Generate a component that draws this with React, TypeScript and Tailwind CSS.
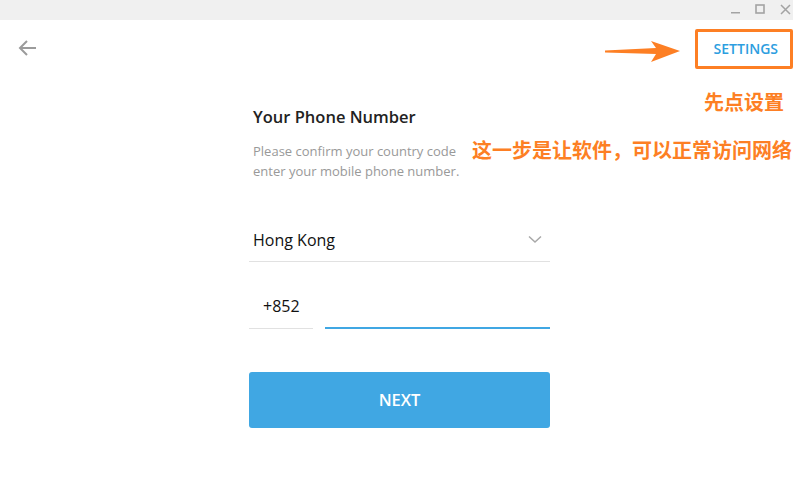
import React from 'react';

const ORANGE = '#fd7f24';

function TitleBar() {
  return (
    <div className="h-[20px] bg-[#f0f0f0] flex items-start justify-end">
      <div className="flex items-center h-[20px] gap-[15px] pr-[2px]">
        {/* minimize */}
        <svg width="9" height="20" viewBox="0 0 9 20">
          <rect x="0" y="12" width="9" height="1.5" fill="#a3a3a3" />
        </svg>
        {/* maximize */}
        <svg width="10" height="20" viewBox="0 0 10 20">
          <rect x="1" y="5" width="8" height="8" fill="none" stroke="#a3a3a3" strokeWidth="1.6" />
        </svg>
        {/* close */}
        <svg width="11" height="20" viewBox="0 0 11 20">
          <path d="M1 5 L10 14 M10 5 L1 14" stroke="#a3a3a3" strokeWidth="1.5" />
        </svg>
      </div>
    </div>
  );
}

function Annotations() {
  return (
    <>
      {/* Arrow pointing at settings */}
      <svg
        className="absolute left-[604px] top-[40px]"
        width="78"
        height="24"
        viewBox="0 0 78 24"
      >
        <polygon
          points="1,10.5 52,8 47,1 76,11 47,22 52,14 1,12.5"
          fill={ORANGE}
        />
      </svg>

      {/* Box around settings */}
      <div className="absolute left-[695px] top-[29px] w-[98px] h-[40px] border-[3px] border-[#fd7f24] rounded-[2px] pointer-events-none" />

      <div
        className="absolute left-[704px] top-[90px] text-[20px] leading-[24px] font-bold text-[#fd7f24]"
        style={{ fontFamily: '"Noto Sans CJK SC", sans-serif' }}
      >
        先点设置
      </div>

      {/* white backing hides the end of the subtitle line, as in the capture */}
      <div
        className="absolute left-[456px] top-[138px] pl-[16px] bg-white text-[20px] leading-[24px] font-bold text-[#fd7f24] whitespace-nowrap"
        style={{ fontFamily: '"Noto Sans CJK SC", sans-serif' }}
      >
        这一步是让软件，可以正常访问网络
      </div>
    </>
  );
}

export default function App() {
  return (
    <div
      className="relative w-[793px] h-[492px] bg-white overflow-hidden"
      style={{ fontFamily: '"Open Sans", "Liberation Sans", sans-serif' }}
    >
      <TitleBar />

      {/* Header row */}
      <div className="h-[56px] flex items-center justify-between pl-[18px] pr-[15px]">
        <svg width="19" height="18" viewBox="0 0 19 18">
          <path
            d="M18 9 H2.5 M9 2 L2 9 L9 16"
            fill="none"
            stroke="#9b9b9b"
            strokeWidth="2"
          />
        </svg>
        <button className="text-[14px] font-semibold text-[#2d9ee0]">
          SETTINGS
        </button>
      </div>

      {/* Form column */}
      <div className="ml-[249px] w-[301px] mt-[29px]">
        <h1 className="pl-[4px] text-[16.5px] leading-[24px] font-semibold text-[#222]">
          Your Phone Number
        </h1>
        <p className="pl-[4px] mt-[12px] text-[13px] leading-[20px] text-[#999] whitespace-nowrap">
          Please confirm your country code and
          <br />
          enter your mobile phone number.
        </p>

        {/* Country select */}
        <div className="mt-[37px] h-[44px] flex items-center justify-between border-b border-[#e1e1e1] pl-[4px] pr-[8px]">
          <span className="text-[16px] text-[#111]">Hong Kong</span>
          <svg width="14" height="9" viewBox="0 0 14 9">
            <path d="M1 1.5 L7 7 L13 1.5" fill="none" stroke="#a8a8a8" strokeWidth="1.5" />
          </svg>
        </div>

        {/* Phone input */}
        <div className="mt-[22px] flex items-stretch h-[45px]">
          <div className="w-[64px] border-b border-[#e1e1e1] flex items-center pl-[14px] text-[16px] text-[#111]">
            +852
          </div>
          <div className="ml-[12px] flex-1 border-b-2 border-[#40a7e3]" />
        </div>

        <button className="mt-[43px] w-full h-[56px] rounded-[3px] bg-[#40a7e3] text-white text-[16.5px] font-semibold">
          NEXT
        </button>
      </div>

      <Annotations />
    </div>
  );
}
